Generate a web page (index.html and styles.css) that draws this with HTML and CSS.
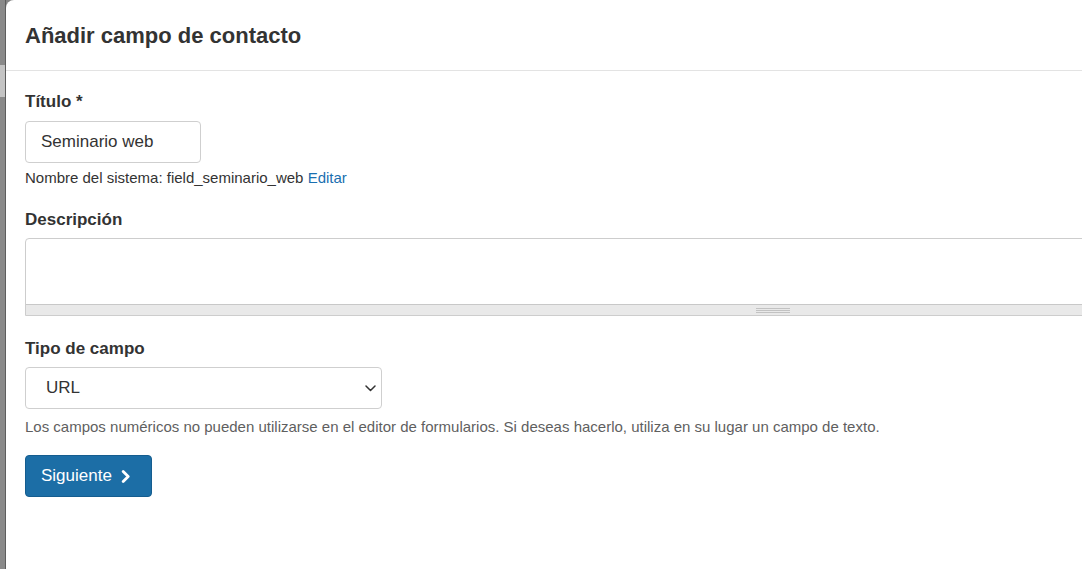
FILE: index.html
```html
<!DOCTYPE html>
<html lang="es">
<head>
<meta charset="utf-8">
<title>Añadir campo de contacto</title>
<link rel="stylesheet" href="styles.css">
</head>
<body>
<div class="page">
  <div class="backdrop"><div class="backdrop-band"></div></div>
  <div class="modal">
    <div class="modal-header">
      <h1 class="modal-title">Añadir campo de contacto</h1>
    </div>
    <div class="modal-body">
      <div class="field field-title">
        <label class="label">Título *</label>
        <div class="input">Seminario web</div>
        <div class="machine-name">Nombre del sistema: field_seminario_web <a class="link" href="#">Editar</a></div>
      </div>
      <div class="field field-desc">
        <label class="label">Descripción</label>
        <div class="textarea">
          <div class="textarea-area"></div>
          <div class="grippie"><span class="grip"></span></div>
        </div>
      </div>
      <div class="field field-type">
        <label class="label">Tipo de campo</label>
        <div class="select">
          <span>URL</span>
          <svg class="select-caret" width="11" height="7" viewBox="0 0 11 7"><path d="M1 1l4.5 4.5L10 1" fill="none" stroke="#333" stroke-width="1.5" stroke-linecap="round" stroke-linejoin="round"/></svg>
        </div>
        <div class="help">Los campos numéricos no pueden utilizarse en el editor de formularios. Si deseas hacerlo, utiliza en su lugar un campo de texto.</div>
      </div>
      <button class="btn-primary" type="button">Siguiente
        <svg class="btn-icon" width="10" height="13" viewBox="0 0 10 13"><path d="M2.2 1.5l5 5-5 5" fill="none" stroke="#fff" stroke-width="2.8" stroke-linecap="round" stroke-linejoin="round"/></svg>
      </button>
    </div>
  </div>
</div>
</body>
</html>
```
FILE: styles.css
```css
* { box-sizing: border-box; }
html, body { margin: 0; padding: 0; }
body {
  overflow: hidden;
  background: #858585;
  font-family: "Liberation Sans", Arial, sans-serif;
  color: #333;
}
.page {
  display: flex;
  height: 569px;
}
.backdrop {
  flex: none;
  width: 6px;
  background: #8a8a8a;
  border-right: 1px solid #5e5e5e;
}
.backdrop-band {
  margin-top: 65px;
  height: 32px;
  background: #c4c4c4;
}
.modal {
  flex: none;
  width: 1534px;
  background: #fff;
  border-top-left-radius: 8px;
}
.modal-header {
  height: 71px;
  display: flex;
  align-items: center;
  padding: 1px 19px 0;
  border-bottom: 1px solid #e3e3e3;
}
.modal-title {
  margin: 0;
  font-size: 22px;
  font-weight: 700;
  color: #333;
}
.modal-body {
  padding: 21px 19px 0;
}
.label {
  display: block;
  font-size: 17px;
  font-weight: 700;
  line-height: 20px;
  color: #333;
}
.field-title .label { margin-bottom: 9px; }
.input {
  width: 176px;
  height: 42px;
  border: 1px solid #cfcfcf;
  border-radius: 4px;
  padding: 0 15px;
  font-size: 17px;
  line-height: 40px;
  color: #333;
}
.machine-name {
  margin-top: 6px;
  font-size: 15px;
  line-height: 18px;
  color: #333;
}
.link {
  color: #1a6fb0;
  text-decoration: none;
}
.field-desc { margin-top: 23px; }
.field-desc .label { margin-bottom: 8px; }
.textarea {
  border: 1px solid #cdcdcd;
  border-top-left-radius: 4px;
  border-top-right-radius: 4px;
}
.textarea-area {
  height: 66px;
  border-bottom: 1px solid #c8c8c8;
}
.grippie {
  height: 10px;
  background: #e9e9e9;
  display: flex;
  justify-content: center;
  align-items: center;
}
.grip {
  width: 34px;
  height: 5px;
  border-top: 1px solid #c2c2c2;
  border-bottom: 1px solid #c2c2c2;
  background: linear-gradient(#e9e9e9 0 1px, #c2c2c2 1px 2px, #e9e9e9 2px);
}
.field-type { margin-top: 23px; }
.field-type .label { margin-bottom: 8px; }
.select {
  width: 357px;
  height: 42px;
  border: 1px solid #cfcfcf;
  border-radius: 4px;
  padding: 0 5px 0 20px;
  display: flex;
  align-items: center;
  justify-content: space-between;
  font-size: 17px;
  color: #333;
}
.select-caret { display: block; }
.help {
  margin-top: 8px;
  font-size: 15px;
  line-height: 20px;
  color: #5f5f5f;
}
.btn-primary {
  margin-top: 18px;
  display: flex;
  align-items: center;
  gap: 9px;
  height: 42px;
  padding: 0 20px 0 15px;
  border: 1px solid #155d8f;
  border-radius: 4px;
  background: #1c6ea6;
  color: #fff;
  font-family: "Liberation Sans", Arial, sans-serif;
  font-size: 17px;
}
.btn-icon { display: block; }
```
